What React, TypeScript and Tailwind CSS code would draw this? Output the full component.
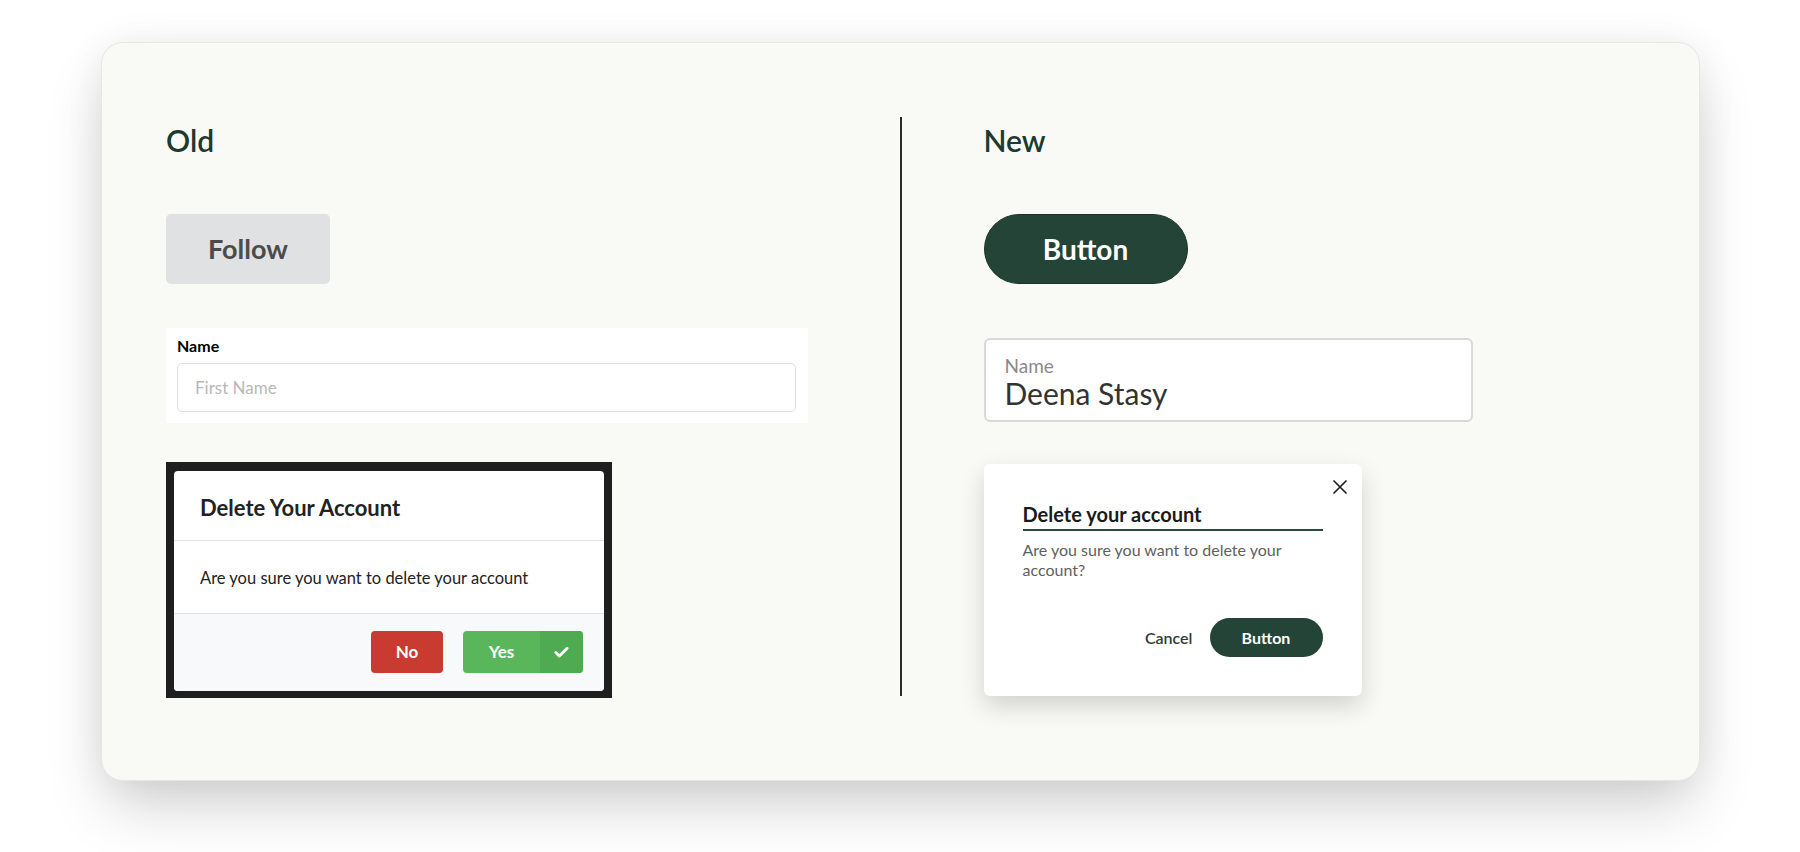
import { Check } from 'lucide-react';

const lato = { fontFamily: 'Lato, "Open Sans", sans-serif' };

function OldSide() {
  return (
    <div className="flex w-[798px] shrink-0 flex-col pl-[64px] pt-[79px]">
      <h2 className="text-[30px] font-semibold leading-[36px] text-[#1c3a2e]">Old</h2>

      <button className="mt-[56px] flex h-[70px] w-[164px] items-center justify-center rounded-[5px] bg-[#e0e1e3] text-[27px] font-bold text-[#4b4b4b]">
        Follow
      </button>

      <div className="mt-[44px] flex h-[95px] w-[642px] flex-col bg-white px-[11px] pt-[8px]">
        <label className="text-[16px] font-bold leading-[20px] text-black">Name</label>
        <div className="mt-[7px] flex h-[49px] w-[619px] items-center rounded-[5px] border-[1.5px] border-[#dedede] bg-white pl-[17px] text-[17px] text-[#b8b8b8]">
          First Name
        </div>
      </div>

      <div className="mt-[39px] flex h-[236px] w-[446px] flex-col bg-[#1f1f1f] px-[8px] pb-[7px] pt-[9px]">
        <div className="flex flex-1 flex-col overflow-hidden rounded-[4px] bg-white">
          <div className="flex h-[70px] items-center border-b border-[#e2e2e2] pl-[26px] pt-[4px]">
            <span className="text-[22px] font-bold text-[#222]">Delete Your Account</span>
          </div>
          <div className="flex h-[73px] items-center border-b border-[#e2e2e2] pl-[26px] pt-[3px]">
            <span className="text-[16.5px] text-[#222]">Are you sure you want to delete your account</span>
          </div>
          <div className="flex flex-1 items-start justify-end gap-[20px] bg-[#f8f9fb] pr-[21px] pt-[17px]">
            <button className="flex h-[42px] w-[72px] items-center justify-center rounded-[4px] bg-[#c93a31] text-[17px] font-bold text-white">
              No
            </button>
            <button className="flex h-[42px] w-[120px] overflow-hidden rounded-[4px] bg-[#59b65b] text-[17px] font-bold text-white">
              <span className="flex flex-1 items-center justify-center">Yes</span>
              <span className="flex w-[43px] items-center justify-center bg-[#4fab51]">
                <Check size={17} strokeWidth={4} />
              </span>
            </button>
          </div>
        </div>
      </div>
    </div>
  );
}

function NewSide() {
  return (
    <div className="flex flex-col pl-[82px] pt-[79px]">
      <h2 className="text-[30px] font-semibold leading-[36px] text-[#1c3a2e]">New</h2>

      <button className="mt-[56px] flex h-[70px] w-[204px] items-center justify-center rounded-full border border-[#1a3329] bg-[#244438] text-[28px] font-bold text-white">
        Button
      </button>

      <div className="mt-[54px] flex h-[84px] w-[489px] flex-col rounded-[6px] border-2 border-[#d9d9d9] bg-white pl-[19px] pt-[16px]">
        <span className="text-[19px] leading-[20px] text-[#8a8a8a]">Name</span>
        <span className="mt-[1px] text-[30px] leading-[32px] text-[#333]">Deena Stasy</span>
      </div>

      <div className="relative mt-[42px] h-[232px] w-[378px] rounded-[6px] bg-white pl-[39px] pt-[38px] shadow-[0_10px_24px_rgba(0,0,0,0.16)]">
        <svg className="absolute right-[15px] top-[16px]" width="14" height="14" viewBox="0 0 14 14">
          <path d="M1 1L13 13M13 1L1 13" stroke="#1f1f1f" strokeWidth="1.7" strokeLinecap="round" />
        </svg>
        <div className="w-[300px]">
          <div className="border-b-2 border-[#2b4a3d] pb-[3px] text-[20px] font-bold leading-[24px] text-[#1a1a1a]">
            Delete your account
          </div>
          <p className="mt-[9px] text-[16px] leading-[20px] text-[#5f5f5f]">
            Are you sure you want to delete your account?
          </p>
          <div className="mt-[38px] flex items-center justify-end gap-[17px]">
            <span className="text-[16px] font-semibold text-[#2d3d36]">Cancel</span>
            <button className="flex h-[39px] w-[113px] items-center justify-center rounded-full bg-[#244438] text-[16px] font-bold text-white">
              Button
            </button>
          </div>
        </div>
      </div>
    </div>
  );
}

export default function App() {
  return (
    <div className="h-[852px] w-full overflow-hidden bg-white pl-[101px] pt-[42px]" style={lato}>
      <div className="flex h-[739px] w-[1599px] rounded-[22px] border border-[#e6e6e6] bg-[#f9faf5] shadow-[0_30px_60px_-6px_rgba(0,0,0,0.18),0_0_40px_rgba(0,0,0,0.06)]">
        <OldSide />
        <div className="mt-[74px] h-[579px] w-[1.5px] shrink-0 bg-[#2b2b2b]" />
        <NewSide />
      </div>
    </div>
  );
}
